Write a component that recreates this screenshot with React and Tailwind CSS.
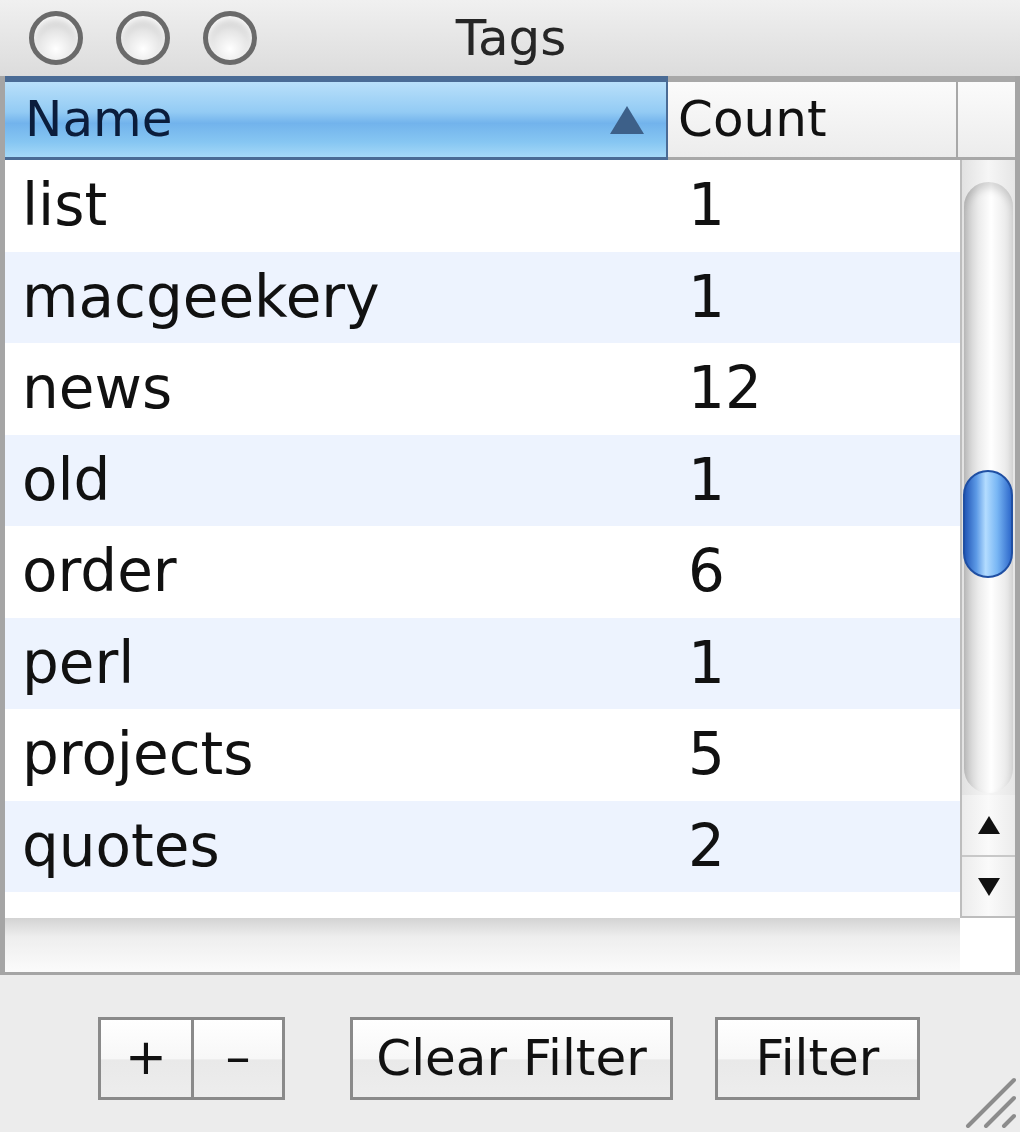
import React from "react";

const rows = [
  ["list", "1"],
  ["macgeekery", "1"],
  ["news", "12"],
  ["old", "1"],
  ["order", "6"],
  ["perl", "1"],
  ["projects", "5"],
  ["quotes", "2"],
];

function Light() {
  return (
    <div className="w-[54px] h-[54px] rounded-full border-[5px] border-[#6a6a6a] bg-[radial-gradient(circle_at_50%_75%,#ffffff_0%,#e6e6e6_45%,#bdbdbd_100%)] shadow-[inset_0_4px_6px_rgba(255,255,255,0.9)]" />
  );
}

function Btn({ children, className = "" }) {
  return (
    <div
      className={
        "h-[83px] border-[3px] border-[#8a8a8a] bg-[linear-gradient(to_bottom,#ffffff_0%,#f7f7f7_50%,#e9e9e9_52%,#ededed_100%)] flex items-center justify-center text-[50px] text-[#111] " +
        className
      }
    >
      {children}
    </div>
  );
}

export default function App() {
  return (
    <div
      className="w-[1020px] h-[1132px] bg-[#ececec] flex flex-col overflow-hidden"
      style={{ fontFamily: '"DejaVu Sans", "Liberation Sans", sans-serif' }}
    >
      {/* Title bar */}
      <div className="h-[76px] relative flex items-center bg-[linear-gradient(to_bottom,#f0f0f0,#dcdcdc)] shrink-0">
        <div className="flex items-center gap-[33px] pl-[29px]">
          <Light />
          <Light />
          <Light />
        </div>
        <div className="absolute inset-0 flex items-center justify-center text-[50px] text-[#262626] pl-[2px]">
          Tags
        </div>
      </div>

      {/* Table area */}
      <div className="h-[899px] shrink-0 border-l-[5px] border-r-[5px] border-b-[3px] border-[#a5a5a5] flex flex-col bg-white">
        {/* Header */}
        <div className="h-[84px] flex shrink-0">
          <div className="w-[663px] border-t-[6px] border-b-[3px] border-r-[2px] border-[#4a6b95] bg-[linear-gradient(to_bottom,#b9e0fa_0%,#93cbf4_40%,#72b3ec_55%,#86c6f2_80%,#a5d9f8_100%)] flex items-center pl-[20px] pr-[22px]">
            <span className="text-[50px] text-[#0b1d3c] flex-1 leading-none pb-[2px]">Name</span>
            <svg width="34" height="28" viewBox="0 0 34 28">
              <polygon points="17,0 34,28 0,28" fill="#3d6089" />
            </svg>
          </div>
          <div className="w-[290px] border-t-[6px] border-b-[3px] border-r-[2px] border-[#a8a8a8] bg-[linear-gradient(to_bottom,#fbfbfb,#ececec)] flex items-center pl-[10px]">
            <span className="text-[50px] text-[#111] leading-none pb-[2px]">Count</span>
          </div>
          <div className="flex-1 border-t-[6px] border-b-[3px] border-[#a8a8a8] bg-[linear-gradient(to_bottom,#fbfbfb,#ececec)]" />
        </div>

        {/* Body */}
        <div className="flex h-[758px] shrink-0">
          <div className="flex-1 flex flex-col">
            {rows.map(([n, c], i) => (
              <div
                key={n}
                className={
                  "h-[91.5px] flex items-center text-[58px] text-[#111] " +
                  (i % 2 === 1 ? "bg-[#edf3fe]" : "bg-white")
                }
              >
                <span className="w-[683px] pl-[17px]">{n}</span>
                <span>{c}</span>
              </div>
            ))}
          </div>
          {/* Vertical scrollbar */}
          <div className="w-[55px] border-l-[2px] border-[#bdbdbd] bg-[#eeeeee] flex flex-col">
            <div className="h-[635px] relative bg-[linear-gradient(to_right,#e2e2e2,#f6f6f6,#e6e6e6)]">
              <div className="absolute left-[2px] right-[2px] top-[22px] bottom-[2px] rounded-full bg-[linear-gradient(to_right,#c4c4c4_0%,#ececec_30%,#ffffff_55%,#e2e2e2_100%)] shadow-[inset_0_6px_8px_rgba(0,0,0,0.15)]" />
              <div className="absolute left-[1px] right-[2px] top-[310px] h-[108px] rounded-full border-[2px] border-[#1f4fa3] bg-[linear-gradient(to_right,#2358b8_0%,#5d9ae6_25%,#b3dcff_45%,#78b6f4_70%,#2f6acc_100%)]" />
            </div>
            <div className="flex-1 bg-[linear-gradient(to_right,#ececec,#fafafa,#ececec)] flex flex-col">
              <div className="h-[62px] flex items-center justify-center border-b-[2px] border-[#c8c8c8]">
                <svg width="22" height="18" viewBox="0 0 22 18">
                  <polygon points="11,0 22,18 0,18" fill="#111" />
                </svg>
              </div>
              <div className="flex-1 flex items-center justify-center border-b-[2px] border-[#bdbdbd]">
                <svg width="22" height="18" viewBox="0 0 22 18">
                  <polygon points="0,0 22,0 11,18" fill="#111" />
                </svg>
              </div>
            </div>
          </div>
        </div>

        {/* Horizontal bar area */}
        <div className="flex-1 flex">
          <div className="flex-1 bg-[linear-gradient(to_bottom,#d3d3d3_0%,#eeeeee_35%,#fbfbfb_100%)]" />
          <div className="w-[55px] bg-white" />
        </div>
      </div>

      {/* Bottom panel */}
      <div className="flex-1 relative bg-[#ececec]">
        <div className="flex items-start pt-[42px]">
          <div className="ml-[98px] flex">
            <Btn className="w-[95px] border-r-[2px]">
              <span className="leading-none pb-[4px]">+</span>
            </Btn>
            <Btn className="w-[92px] border-l-[1px]">
              <span className="leading-none pb-[4px]">–</span>
            </Btn>
          </div>
          <Btn className="ml-[65px] w-[323px]">Clear Filter</Btn>
          <Btn className="ml-[42px] w-[205px]">Filter</Btn>
        </div>
        <svg
          className="absolute right-[4px] bottom-[4px]"
          width="54"
          height="54"
          viewBox="0 0 54 54"
        >
          <line x1="6" y1="52" x2="52" y2="6" stroke="#8c8c8c" strokeWidth="4" strokeLinecap="round" />
          <line x1="24" y1="52" x2="52" y2="24" stroke="#8c8c8c" strokeWidth="4" strokeLinecap="round" />
          <line x1="42" y1="52" x2="52" y2="42" stroke="#8c8c8c" strokeWidth="4" strokeLinecap="round" />
        </svg>
      </div>
    </div>
  );
}
